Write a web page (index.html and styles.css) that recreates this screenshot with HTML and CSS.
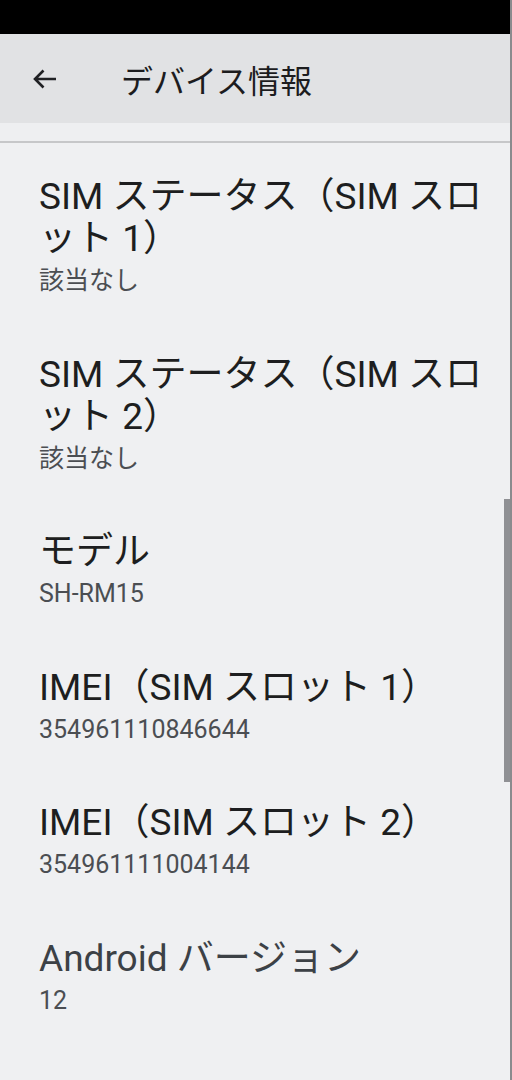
FILE: index.html
```html
<!DOCTYPE html>
<html lang="ja">
  <head>
    <meta charset="UTF-8" />
    <meta name="viewport" content="width=device-width, initial-scale=1.0" />
    <title>デバイス情報</title>
    <link rel="stylesheet" href="styles.css">
  </head>
  <body>
    <div class="screen">
      <div class="status-bar"></div>
      <div class="app-bar">
        <div class="back">
          <svg width="28" height="22" viewBox="0 0 28 22">
            <path d="M25 11H4M12.5 2.5L4 11l8.5 8.5" fill="none" stroke="#202124" stroke-width="2.6" stroke-linecap="butt" stroke-linejoin="miter" />
          </svg>
        </div>
        <div class="app-title">デバイス情報</div>
      </div>
      <div class="app-bar-shade"></div>

      <!-- settings list -->
      <div class="list">
        <div class="item">
          <div class="item-title">SIM ステータス（SIM スロ<br>ット 1）</div>
          <div class="item-sub">該当なし</div>
        </div>
        <div class="item">
          <div class="item-title">SIM ステータス（SIM スロ<br>ット 2）</div>
          <div class="item-sub">該当なし</div>
        </div>
        <div class="item">
          <div class="item-title">モデル</div>
          <div class="item-sub">SH-RM15</div>
        </div>
        <div class="item">
          <div class="item-title">IMEI（SIM スロット 1）</div>
          <div class="item-sub">354961110846644</div>
        </div>
        <div class="item">
          <div class="item-title">IMEI（SIM スロット 2）</div>
          <div class="item-sub">354961111004144</div>
        </div>
        <div class="item faded">
          <div class="item-title">Android バージョン</div>
          <div class="item-sub">12</div>
        </div>
      </div>

      <div class="scrollbar"></div>
    </div>
  </body>
</html>
```

FILE: styles.css
```css
* {
  margin: 0;
  padding: 0;
  box-sizing: border-box;
}
body {
  font-family: Roboto, "Noto Sans CJK JP", sans-serif;
  background-color: #eff0f2;
}

.screen {
  position: relative;
  width: 512px;
  height: 1080px;
  overflow: hidden;
  background-color: #eff0f2;
  border-right: 2px solid #8a8b8e;
}

.status-bar {
  height: 34px;
  background-color: #000;
}

.app-bar {
  display: flex;
  align-items: center;
  height: 89px;
  padding-left: 31px;
  background-color: #e1e2e4;
}
.back {
  display: flex;
  width: 90px;
}
.app-title {
  font-size: 32px;
  color: #1c1c1e;
  margin-top: 1px;
}

.app-bar-shade {
  height: 20px;
  background-color: #eeeff1;
  border-bottom: 2px solid #c6c7c9;
}

.list {
  padding-top: 4px;
}
.item {
  padding: 29px 24px 28.5px 39px;
}
.item-title {
  font-size: 37px;
  line-height: 42px;
  color: #1d1e20;
  margin-bottom: 6px;
}
.item-sub {
  font-size: 25px;
  line-height: 30px;
  color: #4b4e52;
}
.item.faded .item-title {
  color: #3c4146;
}

/* overlay scroll thumb */
.scrollbar {
  position: absolute;
  right: 0;
  top: 499px;
  width: 6px;
  height: 283px;
  background-color: #8f9094;
}
```
